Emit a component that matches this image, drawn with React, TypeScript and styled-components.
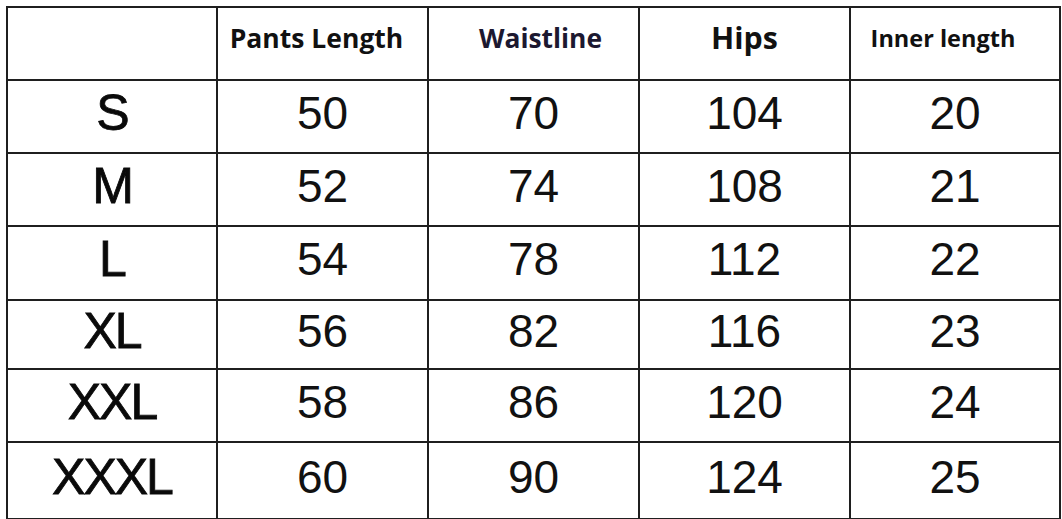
import React from "react";
import styled, { createGlobalStyle } from "styled-components";

const GlobalStyle = createGlobalStyle`
  html, body {
    margin: 0;
    background: #fff;
  }
  body {
    padding: 6px;
  }
`;

interface IHeadCell {
  size: number;
  color?: string;
  shift?: number;
}

const Table = styled.div`
  display: grid;
  grid-template-columns: 208px 209px 209px 209px 208px;
  grid-template-rows: 71px 71px 71px 72px 67px 71px 75px;
  gap: 2px;
  padding: 2px;
  width: max-content;
  background: #1f1f1f;
`;

const Cell = styled.div`
  background: #fff;
  display: flex;
  align-items: center;
  justify-content: center;
  padding-bottom: 8px;
  box-sizing: border-box;
`;

// shift moves the label off the cell centre, as in the original chart
const HeadCell = styled(Cell)<IHeadCell>`
  padding-bottom: 12px;
  padding-left: ${(props) => Math.max(props.shift || 0, 0) * 2}px;
  padding-right: ${(props) => Math.max(-(props.shift || 0), 0) * 2}px;
  font-family: "Open Sans", "Noto Sans", sans-serif;
  font-weight: 700;
  font-size: ${(props) => props.size}px;
  color: ${(props) => props.color || "#111"};
`;

const SizeCell = styled(Cell)`
  font-family: "Liberation Sans", Arial, sans-serif;
  font-size: 50px;
  letter-spacing: -2px;
  color: #0a0a0a;
  -webkit-text-stroke: 0.8px #0a0a0a;
`;

const ValueCell = styled(Cell)`
  font-family: "Liberation Sans", Arial, sans-serif;
  font-size: 46px;
  color: #111;
`;

const headers = [
  { label: "Pants Length", size: 26.5, shift: -6 },
  { label: "Waistline", size: 26.4, color: "#1c1830", shift: 7 },
  { label: "Hips", size: 30.4 },
  { label: "Inner length", size: 23.5, shift: -12 },
];

const rows: [string, number, number, number, number][] = [
  ["S", 50, 70, 104, 20],
  ["M", 52, 74, 108, 21],
  ["L", 54, 78, 112, 22],
  ["XL", 56, 82, 116, 23],
  ["XXL", 58, 86, 120, 24],
  ["XXXL", 60, 90, 124, 25],
];

export default function App() {
  return (
    <>
      <GlobalStyle />
      <Table>
        <Cell />
        {headers.map((h) => (
          <HeadCell key={h.label} size={h.size} color={h.color} shift={h.shift}>
            {h.label}
          </HeadCell>
        ))}
        {rows.map(([size, ...values]) => (
          <React.Fragment key={size}>
            <SizeCell>{size}</SizeCell>
            {values.map((v, i) => (
              <ValueCell key={i}>{v}</ValueCell>
            ))}
          </React.Fragment>
        ))}
      </Table>
    </>
  );
}
